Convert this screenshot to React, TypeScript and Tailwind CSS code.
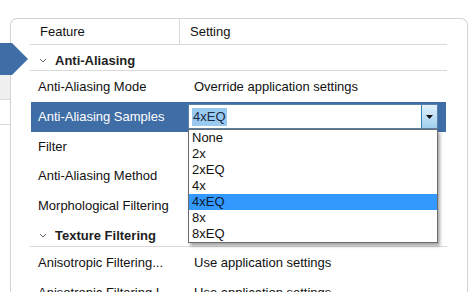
const font = { fontFamily: '"Liberation Sans", Arial, sans-serif' };

const options = ["None", "2x", "2xEQ", "4x", "4xEQ", "8x", "8xEQ"];

function Chevron() {
  return (
    <svg width="8" height="5" viewBox="0 0 8 5" className="shrink-0">
      <path d="M1 1 L4 4 L7 1" fill="none" stroke="#6b6b6b" strokeWidth="1" />
    </svg>
  );
}

function GroupRow({ label, h }: { label: string; h: string }) {
  return (
    <div className={`flex items-start ${h} border-b border-[#d9d9d9]`}>
      <div className="flex items-center gap-[8px] pl-[9px] pt-[6px]">
        <Chevron />
        <span className="font-bold text-[13px] text-[#1e1e1e]">{label}</span>
      </div>
    </div>
  );
}

function Row({ label, value, h }: { label: string; value?: string; h: string }) {
  return (
    <div className={`flex items-center ${h} text-[13px] text-[#111]`}>
      <div className="w-[150px] pl-[8px] whitespace-nowrap">{label}</div>
      <div className="pl-[14px] whitespace-nowrap">{value}</div>
    </div>
  );
}

function SelectedRow() {
  return (
    <div className="flex items-center h-[29.5px] bg-[#3f6da6] text-[13px] text-white ml-[1px] mr-[1px]">
      <div className="w-[149px] pl-[7px] whitespace-nowrap">Anti-Aliasing Samples</div>
      <div className="relative ml-[8px] w-[250px] h-[25px] flex items-stretch bg-white border border-[#5a7fa8]">
        <div className="flex-1 flex items-center pl-[3px]">
          <span className="bg-[#99c9ef] text-[#1b2a44] px-[1px] leading-[18px]">4xEQ</span>
        </div>
        <div className="w-[16px] flex items-center justify-center border-l border-[#3c7fb1] bg-gradient-to-b from-[#e3f1fb] to-[#9fcfee]">
          <svg width="7" height="4" viewBox="0 0 7 4">
            <path d="M0 0 H7 L3.5 4 Z" fill="#111" />
          </svg>
        </div>
        {/* open dropdown list */}
        <div className="absolute left-[-1px] top-[24px] w-[250px] bg-white border border-[#6b6b6b] shadow-[2px_3px_3px_rgba(0,0,0,0.35)] z-10">
          {options.map((o) => (
            <div
              key={o}
              className={`h-[16px] leading-[16px] pl-[3px] text-[13px] ${o === "4xEQ" ? "bg-[#3399ff] text-[#0d1b2e]" : "text-[#111]"}`}
            >
              {o}
            </div>
          ))}
        </div>
      </div>
    </div>
  );
}

export default function App() {
  return (
    <div className="flex w-[469px] h-[292px] overflow-hidden bg-white" style={font}>
      {/* left list strip */}
      <div className="relative w-[10px] shrink-0 flex flex-col">
        <div className="h-[43px]" />
        <div className="h-[32px] bg-[#3f6da6]" />
        <div className="h-[25px] bg-[#f0f0f0] border-b border-[#d9d9d9]" />
        <div className="h-[25px] border-b border-[#d9d9d9]" />
        <svg className="absolute left-0 top-[43px] z-20" width="29" height="32" viewBox="0 0 29 32">
          <path d="M0 0 H12 L28 16 L12 32 H0 Z" fill="#3f6da6" />
        </svg>
      </div>

      {/* settings panel */}
      <div className="flex-1 mt-[18px] mr-[1px] border-l border-t border-r border-[#d4d4d4] rounded-tl-[7px] rounded-tr-[7px] pl-[19px] pr-[20px]">
        <div className="flex h-[26px] border-b border-[#d9d9d9] text-[13px] text-[#111]">
          <div className="w-[150px] border-r border-[#d9d9d9] pl-[10px] flex items-center">Feature</div>
          <div className="pl-[10px] flex items-center">Setting</div>
        </div>
        <GroupRow label="Anti-Aliasing" h="h-[26px]" />
        <Row label="Anti-Aliasing Mode" value="Override application settings" h="h-[31px]" />
        <SelectedRow />
        <Row label="Filter" h="h-[29.5px]" />
        <Row label="Anti-Aliasing Method" h="h-[29.5px]" />
        <Row label="Morphological Filtering" h="h-[29.5px]" />
        <GroupRow label="Texture Filtering" h="h-[27px]" />
        <Row label="Anisotropic Filtering..." value="Use application settings" h="h-[31px]" />
        <Row label="Anisotropic Filtering I..." value="Use application settings" h="h-[29.5px]" />
      </div>
    </div>
  );
}
